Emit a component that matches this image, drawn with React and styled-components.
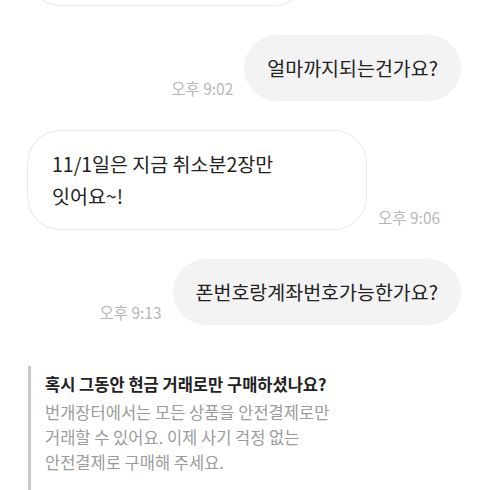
import React from "react";
import styled, { createGlobalStyle } from "styled-components";

const GlobalStyle = createGlobalStyle`
  html, body {
    margin: 0;
    padding: 0;
    background: #ffffff;
    overflow: hidden;
  }
  body {
    font-family: "Noto Sans CJK KR", "Noto Sans", sans-serif;
    color: #222;
  }
`;

const Screen = styled.div`
  width: 490px;
  height: 490px;
  overflow: hidden;
  background: #fff;
`;

const ChatList = styled.div`
  display: flex;
  flex-direction: column;
  gap: 29px;
  margin-top: -94px; /* previous bubble is scrolled off screen */
`;

const Row = styled.div`
  display: flex;
  align-items: flex-end;
  gap: 11px;
  justify-content: ${(p) => (p.$mine ? "flex-end" : "flex-start")};
  padding: ${(p) => (p.$mine ? "0 29px 0 0" : "0 0 0 27px")};
`;

const Bubble = styled.div`
  box-sizing: border-box;
  font-size: 19.5px;
  line-height: 32px;
  color: #222;
  border-radius: 33px;
  background: ${(p) => (p.$mine ? "#f3f3f3" : "#ffffff")};
  border: 1px solid ${(p) => (p.$mine ? "#f3f3f3" : "#e7e7e7")};
  padding: ${(p) => (p.$mine ? "16px 22px" : "17px 24px")};
  width: ${(p) => (p.$width ? `${p.$width}px` : "auto")};
  min-height: ${(p) => (p.$height ? `${p.$height}px` : "0")};
  white-space: nowrap;
`;

const Time = styled.span`
  font-size: 15.5px;
  line-height: 18px;
  color: #b6b6b6;
  margin-bottom: 4px;
  white-space: nowrap;
`;

const Notice = styled.div`
  margin: 41px 0 0 28px;
  border-left: 3px solid #c9c9c9;
  padding: 6px 0 30px 14px;
`;

const NoticeTitle = styled.div`
  font-size: 16.5px;
  line-height: 24px;
  font-weight: 700;
  color: #222;
`;

const NoticeBody = styled.p`
  margin: 4px 0 0;
  font-size: 16.5px;
  line-height: 25px;
  color: #9b9b9b;
`;

const messages = [
  { mine: false, text: [], width: 280, height: 100 },
  { mine: true, text: ["얼마까지되는건가요?"], time: "오후 9:02" },
  { mine: false, text: ["11/1일은 지금 취소분2장만", "잇어요~!"], time: "오후 9:06", width: 340 },
  { mine: true, text: ["폰번호랑계좌번호가능한가요?"], time: "오후 9:13" },
];

const App = () => {
  return (
    <Screen>
      <GlobalStyle />
      <ChatList>
        {messages.map((m, i) => (
          <Row key={i} $mine={m.mine}>
            {m.mine && m.time && <Time>{m.time}</Time>}
            <Bubble $mine={m.mine} $width={m.width} $height={m.height}>
              {m.text.map((line, j) => (
                <React.Fragment key={j}>
                  {j > 0 && <br />}
                  {line}
                </React.Fragment>
              ))}
            </Bubble>
            {!m.mine && m.time && <Time>{m.time}</Time>}
          </Row>
        ))}
      </ChatList>

      <Notice>
        <NoticeTitle>혹시 그동안 현금 거래로만 구매하셨나요?</NoticeTitle>
        <NoticeBody>
          번개장터에서는 모든 상품을 안전결제로만
          <br />
          거래할 수 있어요. 이제 사기 걱정 없는
          <br />
          안전결제로 구매해 주세요.
        </NoticeBody>
      </Notice>
    </Screen>
  );
};

export default App;
